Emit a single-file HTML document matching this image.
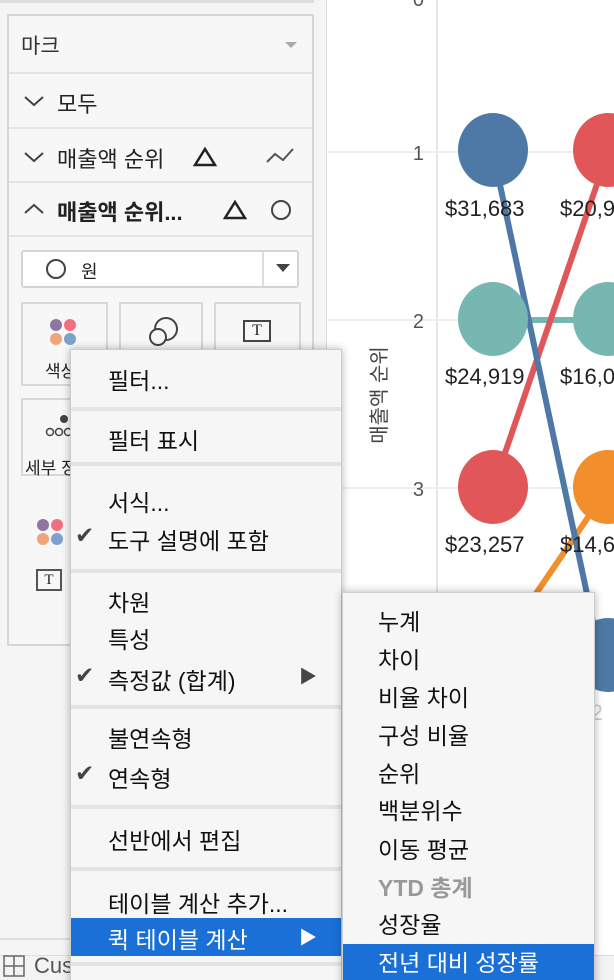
<!DOCTYPE html>
<html><head><meta charset="utf-8"><style>
*{margin:0;padding:0;box-sizing:border-box}
html,body{width:614px;height:980px;overflow:hidden}
body{position:relative;background:#fff;font-family:"Liberation Sans","Noto Sans CJK KR",sans-serif;color:#222}
.abs{position:absolute}
#left{left:0;top:0;width:327px;height:980px;background:#f5f5f5;border-right:1px solid #ddd}
#card{left:7px;top:14px;width:307px;height:632px;border:2px solid #d6d6d6;background:#f7f7f7}
.row{position:absolute;left:0;width:303px;border-bottom:2px solid #e4e4e4}
.t{position:absolute;font-size:21px;white-space:nowrap}
.menu{background:#f6f6f6;box-shadow:0 0 8px rgba(0,0,0,.3);border:1px solid #ccc;overflow:hidden}
.mi{position:absolute;font-size:23px;white-space:nowrap;color:#111}
.sep{position:absolute;left:0;right:0;height:4px;background:#e3e3e3}
.btn{position:absolute;border:2px solid #d8d8d8;background:#f7f7f7}
</style></head><body>
<div id="left" class="abs"></div>
<div class="abs" style="left:0;top:0;width:314px;height:3px;background:#ddd"></div>
<div id="card" class="abs">
 <div class="row" style="top:0;height:58px"></div>
 <div class="t" style="left:12px;top:14px;color:#333">마크</div>
 <div class="abs" style="left:276px;top:26px;border:6px solid transparent;border-top:6px solid #aaa"></div>
 <div class="row" style="top:58px;height:55px"></div>
 <svg class="abs" style="left:14px;top:78px" width="22" height="14"><path d="M2 3 L11 11 L20 3" fill="none" stroke="#444" stroke-width="2"/></svg>
 <div class="t" style="left:48px;top:71px;font-size:22px">모두</div>
 <div class="row" style="top:113px;height:54px"></div>
 <svg class="abs" style="left:14px;top:134px" width="22" height="14"><path d="M2 3 L11 11 L20 3" fill="none" stroke="#444" stroke-width="2"/></svg>
 <div class="t" style="left:48px;top:126px;font-size:22px">매출액 순위</div>
 <svg class="abs" style="left:184px;top:130px" width="24" height="22"><path d="M12 3 L22 19 L2 19 Z" fill="none" stroke="#222" stroke-width="2.5"/></svg>
 <svg class="abs" style="left:256px;top:130px" width="32" height="20"><path d="M2 16 L10 8 L18 14 L28 3" fill="none" stroke="#555" stroke-width="2"/></svg>
 <div class="row" style="top:167px;height:54px"></div>
 <svg class="abs" style="left:14px;top:186px" width="22" height="14"><path d="M2 11 L11 3 L20 11" fill="none" stroke="#444" stroke-width="2"/></svg>
 <div class="t" style="left:48px;top:179px;font-size:22px;font-weight:bold">매출액 순위...</div>
 <svg class="abs" style="left:214px;top:183px" width="24" height="22"><path d="M12 3 L22 19 L2 19 Z" fill="none" stroke="#222" stroke-width="2.5"/></svg>
 <div class="abs" style="left:262px;top:184px;width:20px;height:20px;border:2px solid #444;border-radius:50%"></div>
 <div class="abs" style="left:12px;top:234px;width:278px;height:38px;border:2px solid #d4d4d4;background:#fff;border-radius:3px"></div>
 <div class="abs" style="left:253px;top:236px;width:2px;height:34px;background:#ddd"></div>
 <div class="abs" style="left:267px;top:248px;border:7px solid transparent;border-top:8px solid #444"></div>
 <div class="abs" style="left:37px;top:243px;width:20px;height:20px;border:2px solid #444;border-radius:50%"></div>
 <div class="t" style="left:72px;top:242px;font-size:18px">원</div>
 <div class="btn" style="left:12px;top:286px;width:87px;height:84px"></div>
 <div class="btn" style="left:110px;top:286px;width:84px;height:84px"></div>
 <div class="btn" style="left:205px;top:286px;width:87px;height:84px"></div>
 <div class="btn" style="left:12px;top:382px;width:87px;height:78px"></div>
 <svg class="abs" style="left:40px;top:302px" width="30" height="30"><circle cx="7" cy="7" r="6" fill="#8e76a0"/><circle cx="21" cy="7" r="6" fill="#f07080"/><circle cx="7" cy="21" r="6" fill="#f0a47a"/><circle cx="21" cy="21" r="6" fill="#7ca2cc"/></svg>
 <svg class="abs" style="left:138px;top:300px" width="34" height="32"><circle cx="19" cy="13" r="11" fill="none" stroke="#444" stroke-width="2"/><circle cx="11" cy="21" r="8" fill="#f7f7f7" stroke="#444" stroke-width="2"/></svg>
 <div class="abs" style="left:234px;top:304px;width:28px;height:22px;border:2px solid #444;font-family:'Liberation Serif',serif;font-size:16px;text-align:center;line-height:18px">T</div>
 <div class="t" style="left:36px;top:341px;font-size:17px">색상</div>
 <svg class="abs" style="left:36px;top:398px" width="30" height="30"><circle cx="19" cy="5" r="4" fill="#444"/><circle cx="5" cy="18" r="3.5" fill="none" stroke="#444" stroke-width="1.5"/><circle cx="14" cy="18" r="3.5" fill="none" stroke="#444" stroke-width="1.5"/><circle cx="23" cy="18" r="3.5" fill="none" stroke="#444" stroke-width="1.5"/></svg>
 <div class="t" style="left:16px;top:438px;font-size:17px">세부 정보</div>
 <svg class="abs" style="left:27px;top:502px" width="30" height="30"><circle cx="7" cy="7" r="6" fill="#8e76a0"/><circle cx="21" cy="7" r="6" fill="#f07080"/><circle cx="7" cy="21" r="6" fill="#f0a47a"/><circle cx="21" cy="21" r="6" fill="#7ca2cc"/></svg>
 <div class="abs" style="left:27px;top:553px;width:26px;height:22px;border:2px solid #555;font-family:'Liberation Serif',serif;font-size:15px;text-align:center;line-height:18px">T</div>
</div>
<div class="abs" style="left:0;top:938px;width:327px;height:2px;background:#ddd"></div>
<div class="abs" style="left:0;top:955px;width:614px;height:25px;background:#f3f3f3;border-top:1px solid #ddd"></div>
<svg class="abs" style="left:3px;top:955px" width="24" height="24"><rect x="1" y="1" width="20" height="20" fill="none" stroke="#666" stroke-width="1.5"/><path d="M11 1V21M1 11H21" stroke="#666" stroke-width="1.5"/></svg>
<div class="t" style="left:34px;top:953px;font-size:22px;color:#555">Cus</div>

<svg class="abs" style="left:328px;top:0" width="286" height="955">
 <line x1="109" y1="0" x2="109" y2="955" stroke="#ddd" stroke-width="1.5"/>
 <g stroke="#eee" stroke-width="2"><line x1="0" y1="152" x2="286" y2="152"/><line x1="0" y1="320" x2="286" y2="320"/><line x1="0" y1="488" x2="286" y2="488"/></g>
 <g font-family="Liberation Sans" font-size="20" fill="#555" text-anchor="end"><text x="96" y="6">0</text><text x="96" y="160">1</text><text x="96" y="328">2</text><text x="96" y="496">3</text></g>
 <text transform="translate(58,395) rotate(-90)" font-family="Liberation Sans,Noto Sans CJK KR" font-size="20" fill="#444" text-anchor="middle">매출액 순위</text>
 <line x1="165" y1="320" x2="280" y2="320" stroke="#76b7b2" stroke-width="6"/>
 <line x1="165" y1="488" x2="280" y2="152" stroke="#e15759" stroke-width="6"/>
 <line x1="280" y1="488" x2="190" y2="620" stroke="#f28e2b" stroke-width="6"/>
 <line x1="165" y1="152" x2="272" y2="655" stroke="#4e79a7" stroke-width="6"/>
 <ellipse cx="165" cy="150" rx="35" ry="37" fill="#4e79a7"/>
 <ellipse cx="280" cy="150" rx="35" ry="37" fill="#e15759"/>
 <ellipse cx="165" cy="319" rx="35" ry="37" fill="#76b7b2"/>
 <ellipse cx="280" cy="319" rx="35" ry="37" fill="#76b7b2"/>
 <ellipse cx="165" cy="487" rx="35" ry="37" fill="#e15759"/>
 <ellipse cx="280" cy="487" rx="35" ry="37" fill="#f28e2b"/>
 <ellipse cx="280" cy="655" rx="35" ry="37" fill="#4e79a7"/>
 <g font-family="Liberation Sans" font-size="22" fill="#222"><text x="117" y="216">$31,683</text><text x="232" y="216">$20,9</text><text x="117" y="384">$24,919</text><text x="232" y="384">$16,0</text><text x="117" y="552">$23,257</text><text x="232" y="552">$14,6</text><text x="232" y="720" fill="#ccc">$8,2</text></g>
</svg>

<div class="abs menu" style="left:70px;top:349px;width:272px;height:640px">
 <div class="mi" style="left:37px;top:12px">필터...</div>
 <div class="sep" style="top:57px"></div>
 <div class="mi" style="left:37px;top:72px">필터 표시</div>
 <div class="sep" style="top:112px"></div>
 <div class="mi" style="left:37px;top:134px">서식...</div>
 <div class="mi" style="left:4px;top:172px;color:#444">✔</div>
 <div class="mi" style="left:37px;top:172px">도구 설명에 포함</div>
 <div class="sep" style="top:219px"></div>
 <div class="mi" style="left:37px;top:234px">차원</div>
 <div class="mi" style="left:37px;top:271px">특성</div>
 <div class="mi" style="left:4px;top:312px;color:#444">✔</div>
 <div class="mi" style="left:37px;top:312px">측정값 (합계)</div>
 <div class="mi" style="left:228px;top:313px;color:#444;font-size:18px">▶</div>
 <div class="sep" style="top:355px"></div>
 <div class="mi" style="left:37px;top:370px">불연속형</div>
 <div class="mi" style="left:4px;top:410px;color:#444">✔</div>
 <div class="mi" style="left:37px;top:410px">연속형</div>
 <div class="sep" style="top:455px"></div>
 <div class="mi" style="left:37px;top:472px">선반에서 편집</div>
 <div class="sep" style="top:517px"></div>
 <div class="mi" style="left:37px;top:535px">테이블 계산 추가...</div>
 <div class="abs" style="left:0;top:568px;width:270px;height:38px;background:#1a70d6"></div>
 <div class="mi" style="left:37px;top:571px;color:#fff">퀵 테이블 계산</div>
 <div class="mi" style="left:228px;top:574px;color:#fff;font-size:18px">▶</div>
 <div class="sep" style="top:612px"></div>
</div>

<div class="abs menu" style="left:342px;top:592px;width:253px;height:400px">
 <div class="mi" style="left:35px;top:10px">누계</div>
 <div class="mi" style="left:35px;top:48px">차이</div>
 <div class="mi" style="left:35px;top:86px">비율 차이</div>
 <div class="mi" style="left:35px;top:124px">구성 비율</div>
 <div class="mi" style="left:35px;top:162px">순위</div>
 <div class="mi" style="left:35px;top:199px">백분위수</div>
 <div class="mi" style="left:35px;top:238px">이동 평균</div>
 <div class="mi" style="left:35px;top:276px;color:#999;font-weight:bold">YTD 총계</div>
 <div class="mi" style="left:35px;top:313px">성장율</div>
 <div class="abs" style="left:0;top:351px;width:252px;height:40px;background:#1a70d6"></div>
 <div class="mi" style="left:35px;top:351px;color:#fff">전년 대비 성장률</div>
</div>
</body></html>
